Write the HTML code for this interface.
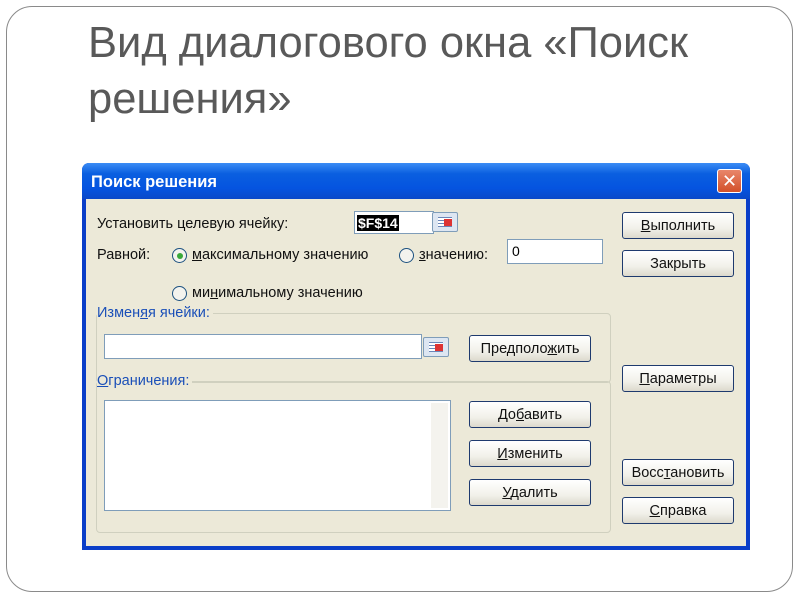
<!DOCTYPE html>
<html><head><meta charset="utf-8"><style>
*{margin:0;padding:0;box-sizing:border-box}
body{width:800px;height:600px;background:#fff;position:relative;overflow:hidden;font-family:"Liberation Sans","DejaVu Sans",sans-serif}
.frame{position:absolute;left:6px;top:6px;width:787px;height:586px;border:1.5px solid #8a8a8a;border-radius:26px}
h1{position:absolute;left:88px;top:15px;font-weight:normal;font-size:43.5px;line-height:56px;color:#595959;width:690px}
.win{position:absolute;left:82px;top:163px;width:668px;height:387px;background:#0a3ec8;border-radius:7px 7px 0 0}
.tb{position:absolute;left:0;top:0;width:668px;height:36px;border-radius:7px 7px 0 0;background:linear-gradient(#3b8cf5,#0a5fe0 30%,#0554e0 70%,#0a48c8)}
.tb span{position:absolute;left:9px;top:10px;color:#fff;font-weight:bold;font-size:16.5px}
.x{position:absolute;left:635px;top:6px;width:25px;height:24px;border:1px solid #fff;border-radius:3px;background:linear-gradient(#e9866a,#d3502a);color:#fff;font-size:18px;text-align:center;line-height:22px;font-weight:bold}
.body{position:absolute;left:4px;top:36px;width:660px;height:347px;background:#ece9d8}
.t{position:absolute;font-size:14.5px;color:#111;white-space:nowrap}
.btn{position:absolute;width:112px;height:27px;border:1px solid #1e3a6e;border-radius:3px;background:linear-gradient(#fff,#f2f1ea 60%,#dcd9cc);font-size:14.5px;text-align:center;line-height:26px;color:#111;white-space:nowrap}
.in{position:absolute;background:#fff;border:1px solid #7f9db9}
.rad{position:absolute;width:15px;height:15px;border:1px solid #1c5180;border-radius:50%;background:#f3f3ee}
.rad.on::after{content:"";position:absolute;left:3.5px;top:3.5px;width:6px;height:6px;border-radius:50%;background:#3aa83a}
.grp{position:absolute;border:1px solid #d0d0bf;border-radius:4px}
.gl{position:absolute;font-size:14.5px;color:#1a4fb8;background:#ece9d8;padding-right:3px}
.ref{position:absolute;width:26px;height:20px;border:1px solid #7f9db9;border-radius:2px;background:#dde6f2}
.ref::after{content:"";position:absolute;left:5px;top:4px;width:14px;height:10px;background:repeating-linear-gradient(#6a86b8 0 1px,#fff 1px 3px);}
.ref::before{content:"";position:absolute;left:11px;top:6px;width:8px;height:7px;background:#d33;z-index:2}
</style></head><body>
<div class="frame"></div>
<h1>Вид диалогового окна «Поиск решения»</h1>
<div class="win">
 <div class="tb"><span>Поиск решения</span><div class="x">✕</div></div>
 <div class="body">
  <div class="t" style="left:11px;top:17px">Установить целевую ячейку:</div>
  <div class="in" style="left:268px;top:12px;width:80px;height:23px"><span style="position:absolute;left:2px;top:3px;background:#000;color:#fff;font-size:14px;font-weight:bold;padding:0 1px">$F$14</span></div>
  <div class="ref" style="left:346px;top:13px"></div>
  <div class="t" style="left:11px;top:48px">Равной:</div>
  <div class="rad on" style="left:86px;top:49px"></div>
  <div class="t" style="left:106px;top:48px"><u>м</u>аксимальному значению</div>
  <div class="rad" style="left:313px;top:49px"></div>
  <div class="t" style="left:333px;top:48px"><u>з</u>начению:</div>
  <div class="in" style="left:421px;top:40px;width:96px;height:25px"><span style="position:absolute;left:4px;top:3px;font-size:14px">0</span></div>
  <div class="rad" style="left:86px;top:87px"></div>
  <div class="t" style="left:106px;top:86px">ми<u>н</u>имальному значению</div>
  <div class="grp" style="left:10px;top:114px;width:515px;height:70px"></div>
  <div class="gl" style="left:11px;top:106px">Измен<u>я</u>я ячейки:</div>
  <div class="in" style="left:18px;top:135px;width:318px;height:25px"></div>
  <div class="ref" style="left:337px;top:138px"></div>
  <div class="btn" style="left:383px;top:136px;width:122px">Предполо<u>ж</u>ить</div>
  <div class="grp" style="left:10px;top:182px;width:515px;height:152px"></div>
  <div class="gl" style="left:11px;top:174px"><u>О</u>граничения:</div>
  <div class="in" style="left:18px;top:201px;width:347px;height:111px"><div style="position:absolute;right:2px;top:2px;width:17px;height:105px;background:#f4f3ee;"></div></div>
  <div class="btn" style="left:383px;top:202px;width:122px">До<u>б</u>авить</div>
  <div class="btn" style="left:383px;top:241px;width:122px"><u>И</u>зменить</div>
  <div class="btn" style="left:383px;top:280px;width:122px"><u>У</u>далить</div>
  <div class="btn" style="left:536px;top:13px"><u>В</u>ыполнить</div>
  <div class="btn" style="left:536px;top:51px">Закрыть</div>
  <div class="btn" style="left:536px;top:166px"><u>П</u>араметры</div>
  <div class="btn" style="left:536px;top:260px">Восс<u>т</u>ановить</div>
  <div class="btn" style="left:536px;top:298px"><u>С</u>правка</div>
 </div>
</div>
</body></html>
